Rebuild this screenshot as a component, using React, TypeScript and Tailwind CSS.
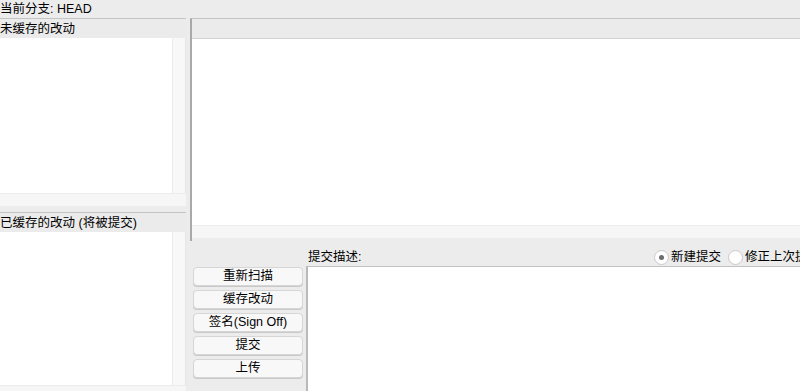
import React from 'react';

const font = { fontFamily: '"Liberation Sans", "Noto Sans CJK SC", sans-serif' };

const FileList = ({ title, listHeight }: { title: string; listHeight: string }) => (
  <div className="flex flex-col shrink-0">
    <div className="h-[20px] leading-[20px] text-[12.5px] text-[#000] border-t border-[#c4c4c4] bg-[#ebebeb] whitespace-nowrap">
      {title}
    </div>
    <div className={`flex ${listHeight}`}>
      <div className="w-[172px] bg-white" />
      <div className="w-[13px] bg-[#f8f8f8] border-l border-[#ececec]" />
      <div className="w-[1px] bg-[#e6e6e6]" />
    </div>
    <div className="h-[13px] bg-[#f6f6f6] border-t border-[#ececec]" />
  </div>
);

const CmdButton = ({ label }: { label: string }) => (
  <button className="h-[19px] w-[110px] rounded-[4px] bg-[#f8f8f8] border border-[#d6d6d6] shadow-[0_1px_0_#c9c9c9] text-[12.5px] leading-[17px] text-[#000] text-center">
    {label}
  </button>
);

const Radio = ({ checked, label }: { checked?: boolean; label: string }) => (
  <div className="flex items-center gap-[2px] shrink-0">
    <div className="w-[15px] h-[15px] rounded-full bg-white border border-[#c8c8c8] flex items-center justify-center">
      {checked && <div className="w-[5px] h-[5px] rounded-full bg-[#6c6c6c]" />}
    </div>
    <span className="text-[12.5px] text-[#000] whitespace-nowrap">{label}</span>
  </div>
);

const App = () => {
  return (
    <div className="w-[800px] h-[391px] bg-[#ececec] flex flex-col overflow-hidden" style={font}>
      <div className="h-[18px] shrink-0 leading-[18px] text-[12.5px] text-[#000] whitespace-nowrap">当前分支: HEAD</div>

      <div className="flex flex-1 min-h-0">
        {/* left column */}
        <div className="w-[186px] flex flex-col overflow-hidden">
          <FileList title="未缓存的改动" listHeight="h-[155px]" />
          <div className="h-[6px] shrink-0" />
          <FileList title="已缓存的改动 (将被提交)" listHeight="h-[153px]" />
        </div>

        <div className="w-[4px]" />

        {/* right column */}
        <div className="flex-1 flex flex-col min-w-0">
          <div className="h-[223px] shrink-0 flex flex-col border-l-2 border-t border-l-[#a9a9a9] border-t-[#c4c4c4]">
            <div className="h-[20px] bg-[#ebebeb] border-b border-[#d2d2d2]" />
            <div className="flex-1 bg-white" />
            <div className="h-[13px] bg-[#f6f6f6] border-t border-[#ececec]" />
            <div className="h-[3px]" />
          </div>

          <div className="flex flex-1 min-h-0">
            <div className="w-[116px] pl-[3px] pt-[26px] flex flex-col gap-[4px]">
              <CmdButton label="重新扫描" />
              <CmdButton label="缓存改动" />
              <CmdButton label="签名(Sign Off)" />
              <CmdButton label="提交" />
              <CmdButton label="上传" />
            </div>
            <div className="flex-1 flex flex-col min-w-0">
              <div className="h-[25px] pt-[7px] flex items-center">
                <span className="pl-[2px] text-[12.5px] text-[#000] whitespace-nowrap">提交描述:</span>
                <div className="flex-1" />
                <div className="w-[146px] shrink-0 overflow-hidden flex items-center gap-[7px]">
                  <Radio checked label="新建提交" />
                  <Radio label="修正上次提交" />
                </div>
              </div>
              <div className="flex-1 bg-white border-l-2 border-t border-l-[#b9b9b9] border-t-[#c2c2c2]" />
            </div>
          </div>
        </div>
      </div>
    </div>
  );
};

export default App;
